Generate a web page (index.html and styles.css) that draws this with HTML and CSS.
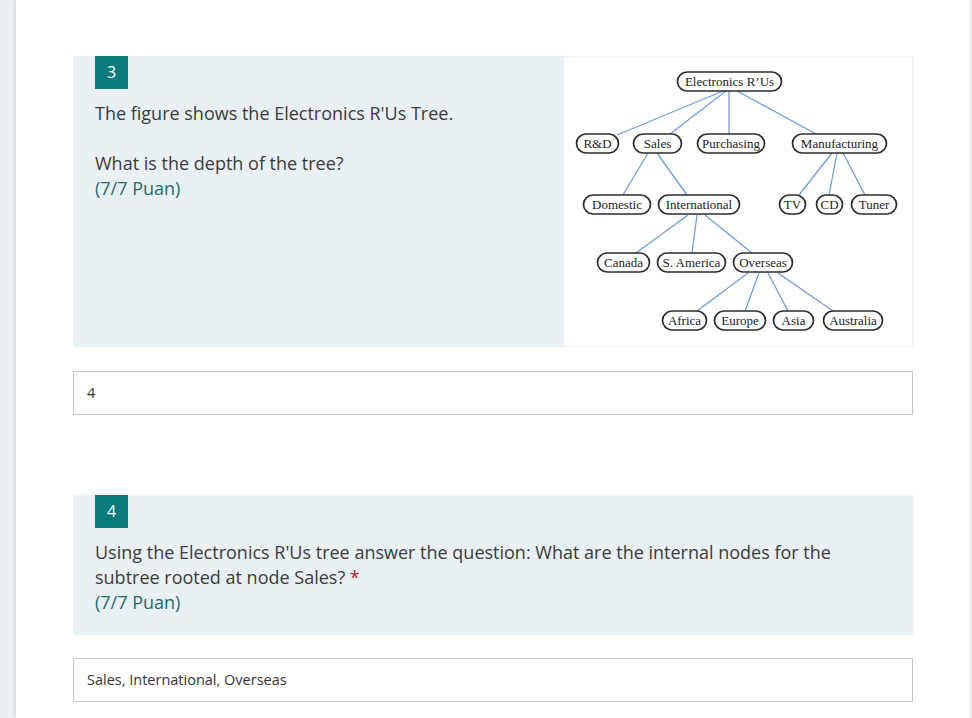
FILE: index.html
```html
<!DOCTYPE html>
<html>
<head>
<meta charset="utf-8">
<link rel="stylesheet" href="styles.css">
</head>
<body>
<div class="page">
  <div class="card">
    <div class="question q3">
      <div class="qbody">
        <div class="badge">3</div>
        <div class="qtext">The figure shows the Electronics R'Us Tree.</div>
        <div class="qtext blank">&nbsp;</div>
        <div class="qtext">What is the depth of the tree?</div>
        <div class="qtext points">(7/7 Puan)</div>
      </div>
      <div class="figure">
        <svg width="348" height="289" viewBox="564 57 348 289" xmlns="http://www.w3.org/2000/svg">
          <rect x="564" y="57" width="348" height="289" fill="#fff"/>
          <g stroke="#6f9de0" stroke-width="1.3" fill="none">
            <line x1="723" y1="91" x2="617" y2="135"/>
            <line x1="726" y1="91" x2="670" y2="134"/>
            <line x1="729" y1="91" x2="729" y2="134"/>
            <line x1="737" y1="91" x2="816" y2="134"/>
            <line x1="648" y1="153" x2="623" y2="195"/>
            <line x1="657" y1="153" x2="687" y2="195"/>
            <line x1="832" y1="153" x2="799" y2="195"/>
            <line x1="837" y1="153" x2="829" y2="195"/>
            <line x1="843" y1="153" x2="865" y2="195"/>
            <line x1="688" y1="215" x2="636" y2="253"/>
            <line x1="697" y1="215" x2="692" y2="253"/>
            <line x1="705" y1="215" x2="752" y2="253"/>
            <line x1="748" y1="273" x2="697" y2="311"/>
            <line x1="759" y1="273" x2="745" y2="311"/>
            <line x1="768" y1="273" x2="788" y2="311"/>
            <line x1="778" y1="273" x2="833" y2="311"/>
          </g>
          <g stroke="#2b2b2b" stroke-width="1.7" fill="#fff">
            <rect x="677.5" y="72" width="104" height="19" rx="9.5"/>
            <rect x="576.5" y="134" width="42" height="19" rx="9.5"/>
            <rect x="633.5" y="134" width="48" height="19" rx="9.5"/>
            <rect x="697.5" y="134" width="67" height="19" rx="9.5"/>
            <rect x="792.5" y="134" width="94" height="19" rx="9.5"/>
            <rect x="583.5" y="195" width="67" height="19" rx="9.5"/>
            <rect x="658.5" y="195" width="81" height="19" rx="9.5"/>
            <rect x="779.5" y="195" width="26" height="19" rx="9.5"/>
            <rect x="816.5" y="195" width="26" height="19" rx="9.5"/>
            <rect x="851.5" y="195" width="45" height="19" rx="9.5"/>
            <rect x="597.5" y="253" width="52" height="19" rx="9.5"/>
            <rect x="657.5" y="253" width="68" height="19" rx="9.5"/>
            <rect x="733.5" y="253" width="59" height="19" rx="9.5"/>
            <rect x="662.5" y="311" width="44" height="19" rx="9.5"/>
            <rect x="714.5" y="311" width="51" height="19" rx="9.5"/>
            <rect x="773.5" y="311" width="40" height="19" rx="9.5"/>
            <rect x="823.5" y="311" width="59" height="19" rx="9.5"/>
          </g>
          <g class="nodetext" text-anchor="middle">
            <text x="729.5" y="86">Electronics R’Us</text>
            <text x="597.5" y="148">R&amp;D</text>
            <text x="657.5" y="148">Sales</text>
            <text x="731" y="148">Purchasing</text>
            <text x="839.5" y="148">Manufacturing</text>
            <text x="617" y="209">Domestic</text>
            <text x="699" y="209">International</text>
            <text x="792.5" y="209">TV</text>
            <text x="829.5" y="209">CD</text>
            <text x="874" y="209">Tuner</text>
            <text x="623.5" y="267">Canada</text>
            <text x="691.5" y="267">S. America</text>
            <text x="763" y="267">Overseas</text>
            <text x="684.5" y="325">Africa</text>
            <text x="740" y="325">Europe</text>
            <text x="793.5" y="325">Asia</text>
            <text x="853" y="325">Australia</text>
          </g>
        </svg>
      </div>
    </div>
    <div class="answer">4</div>

    <div class="question q4">
      <div class="qbody">
        <div class="badge">4</div>
        <div class="qtext wide">Using the Electronics R'Us tree answer the question: What are the internal nodes for the subtree rooted at node Sales?&nbsp;<span class="req">*</span></div>
        <div class="qtext points">(7/7 Puan)</div>
      </div>
    </div>
    <div class="answer">Sales, International, Overseas</div>
  </div>
  <div class="rightstrip"></div>
</div>
</body>
</html>
```

FILE: styles.css
```css
html, body {
  margin: 0;
  padding: 0;
  background: #eaf0f3;
  overflow: hidden;
}
.page {
  display: flex;
  height: 718px;
  padding-left: 16px;
}
.card {
  width: 896px;
  background: #fff;
  padding: 56px 56px 0 57px;
  box-shadow: -2px 0 3px rgba(0,0,0,0.08);
  font-family: "Open Sans", "Noto Sans", sans-serif;
  color: #333;
}
.rightstrip {
  width: 3px;
}
.question {
  background: #e9f0f3;
  display: flex;
}
.q3 {
  height: 291px;
  margin-bottom: 24px;
}
.q4 {
  margin-top: 80px;
  margin-bottom: 23px;
  padding-bottom: 20px;
}
.qbody {
  flex: 1;
  padding: 0 22px;
}
.badge {
  width: 33px;
  height: 33px;
  background: #0b7a7a;
  color: #fff;
  font-size: 16px;
  line-height: 33px;
  text-align: center;
  margin-bottom: 12px;
}
.qtext {
  font-size: 18px;
  line-height: 25px;
  color: #3b3b3b;
}
.wide {
  max-width: 760px;
}
.points {
  color: #1f6b6b;
}
.req {
  color: #b3262c;
}
.figure {
  padding: 1px 1px 1px 0;
}
.figure svg {
  display: block;
}
.nodetext {
  font-family: "Liberation Serif", serif;
  font-size: 13px;
  fill: #222;
}
.answer {
  height: 42px;
  border: 1px solid #c6c6c6;
  padding: 0 13px;
  font-size: 14.5px;
  line-height: 42px;
  color: #333;
}
```
